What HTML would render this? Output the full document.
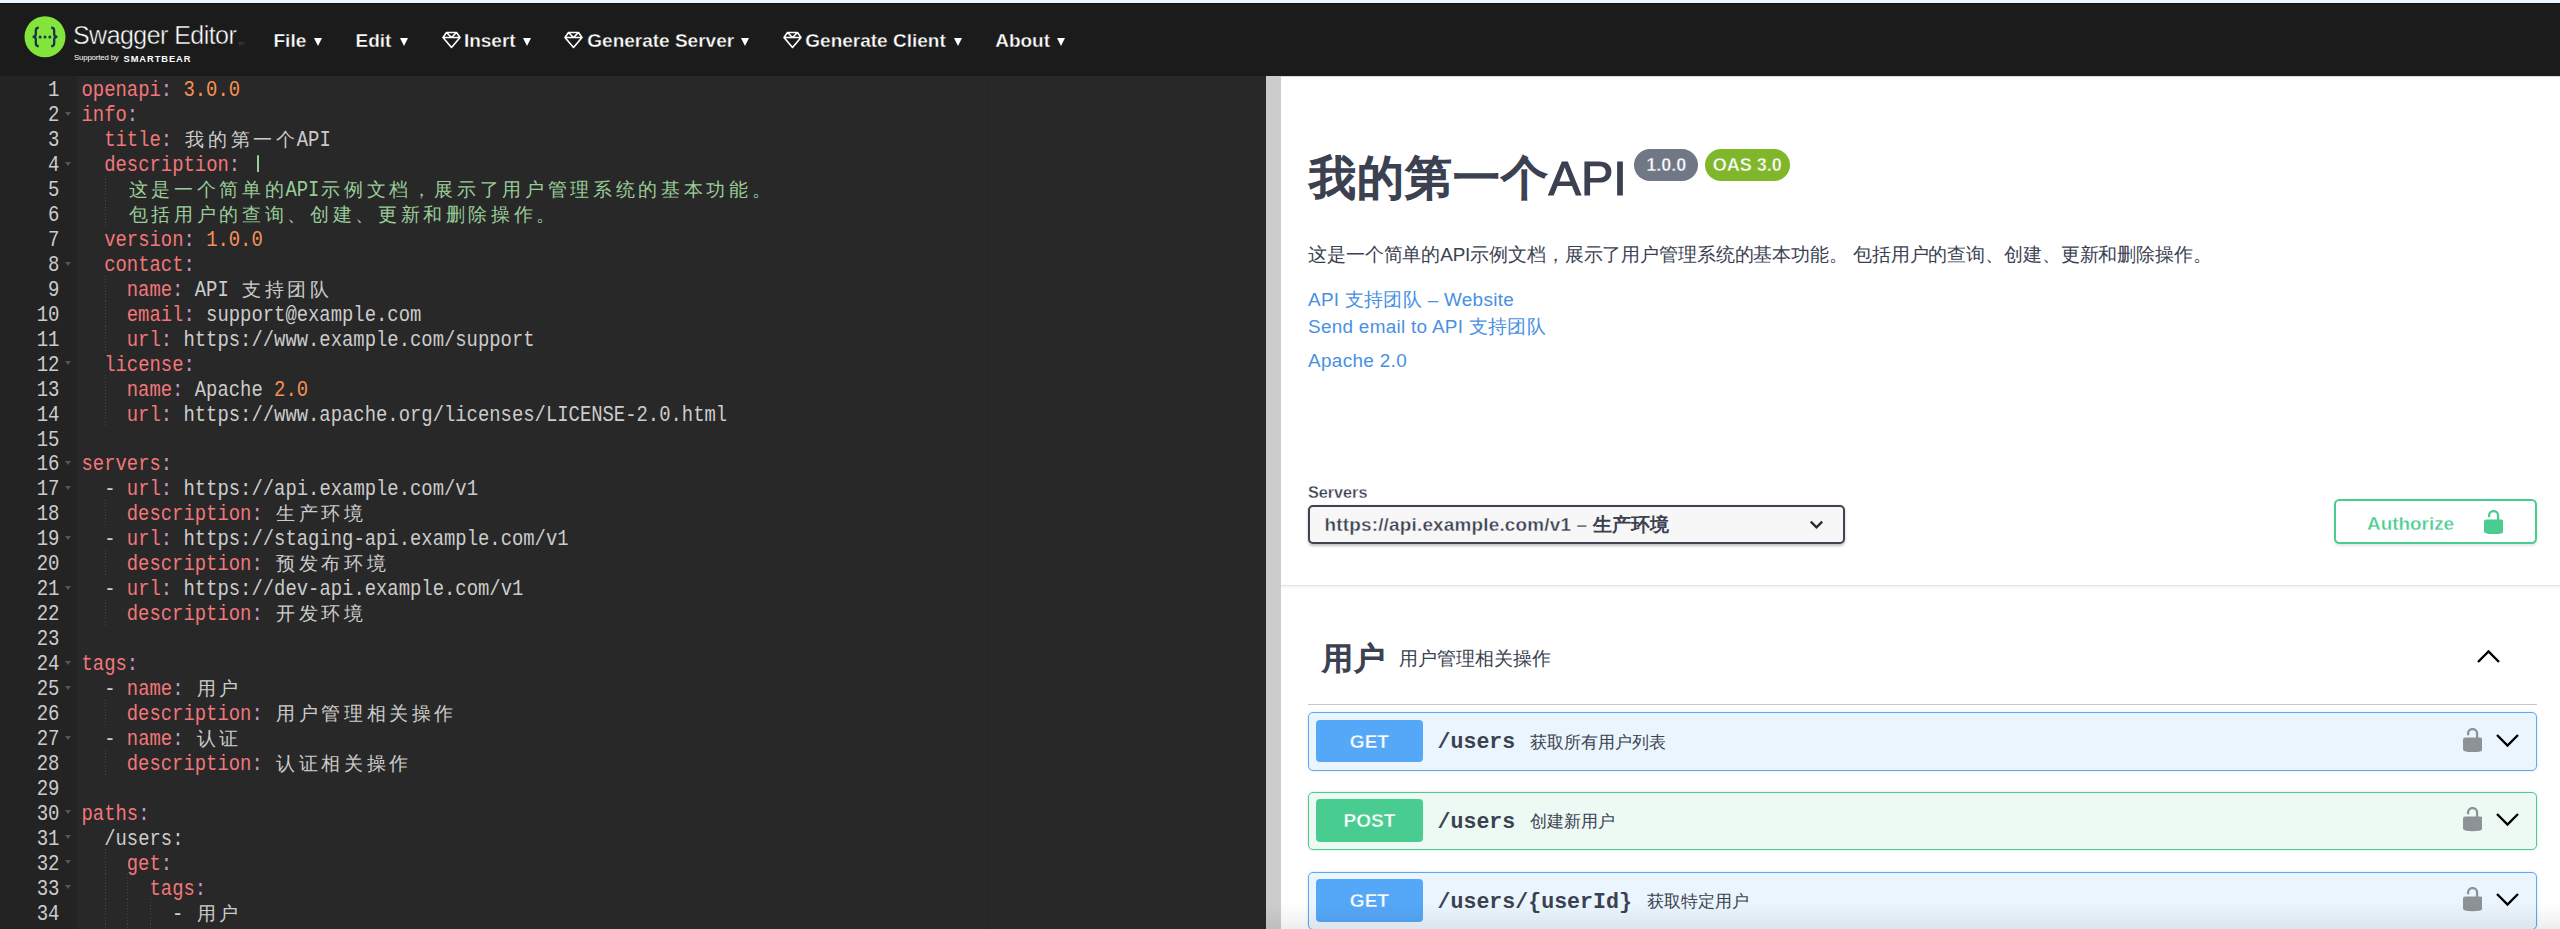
<!DOCTYPE html><html><head><meta charset="utf-8"><style>
*{margin:0;padding:0;box-sizing:border-box}
html,body{width:2560px;height:929px;overflow:hidden;background:#fff;position:relative;font-family:"Liberation Sans",sans-serif}
#strip{position:absolute;left:0;top:0;width:2560px;height:3px;background:#eaf5fd}
#topbar{position:absolute;left:0;top:3px;width:2560px;height:73px;background:#1b1b1b;border-top:1px solid #111}
.brand{position:absolute;color:#fff;white-space:nowrap}
.menu{position:absolute;top:26.7px;color:#fff;font-weight:bold;font-size:19px;line-height:28px;white-space:nowrap;-webkit-text-stroke:.35px #1b1b1b}
.arr{position:absolute;top:38.2px;width:0;height:0;border-left:4.9px solid transparent;border-right:4.9px solid transparent;border-top:8.2px solid #fff}
.dia{position:absolute;top:31px}
#gutter{position:absolute;left:0;top:76px;width:77px;height:853px;background:#232323}
#editor{position:absolute;left:77px;top:76px;width:1189px;height:853px;background:#282828}
#pm{position:absolute;left:988px;top:76px;width:1px;height:853px;background:#252525}
.ln{position:absolute;height:25px;line-height:25px;font-family:"Liberation Mono",monospace;font-size:18.883px;white-space:pre;color:#cccccc;transform:scaleY(1.2);transform-origin:0 17.6px}
.ln i{font-style:normal;display:inline-block;position:relative;top:.2px;width:22.66px;text-align:center;font-size:19px;transform:scaleY(.8333);transform-origin:50% 17.6px}
.bar{display:inline-block;width:11.3px;height:8px;vertical-align:0;position:relative}.bar:after{content:'';position:absolute;left:5.3px;top:-4.6px;width:2.1px;height:13.2px;background:#99cc99}
.k{color:#f2777a}.p{color:#cc99cc}.n{color:#f99157}.t{color:#cccccc}.g{color:#99cc99}
.gn{position:absolute;left:0;width:59.5px;height:25px;line-height:25px;text-align:right;font-family:"Liberation Mono",monospace;font-size:19px;color:#cccccc;transform:scaleY(1.2);transform-origin:0 17.6px}
.fold{position:absolute;left:64.5px;width:0;height:0;border-left:3.6px solid transparent;border-right:3.6px solid transparent;border-top:4.5px solid #555}
.gd{position:absolute;width:1px;height:25px;background-image:linear-gradient(#4a4a4a 50%,transparent 50%);background-size:1px 3px;opacity:.8}
#divider{position:absolute;left:1266px;top:76px;width:15px;height:853px;background:#cccccc}
#right{position:absolute;left:1281px;top:76px;width:1279px;height:853px;background:#fff;overflow:hidden}
.r{position:absolute;white-space:nowrap;color:#3b4151}
.pill{position:absolute;height:32px;border-radius:16px;color:#fff;font-weight:bold;font-size:18px;line-height:32px;text-align:center}
a{color:#4990e2;text-decoration:none}
.opb{position:absolute;left:1308px;width:1229px;height:58.6px;border-radius:5px;box-shadow:0 0 3px rgba(0,0,0,.13)}
.get{border:1.35px solid #5aa9f9;background:#ebf5fd}
.post{border:1.35px solid #49cc90;background:#edfaf4}
.badge{position:absolute;left:6.6px;top:6.6px;width:107.6px;height:42.7px;border-radius:4px;color:#fff;font-weight:bold;font-size:19px;line-height:44.5px;text-align:center}
.get .badge{background:#55a7f7;-webkit-text-stroke:.35px #55a7f7}.post .badge{background:#49cc90;-webkit-text-stroke:.35px #49cc90}
.path{position:absolute;left:128.5px;top:14px;font-family:"Liberation Mono",monospace;font-weight:bold;font-size:21.6px;line-height:30px;color:#3b4151;white-space:nowrap}
.sum{position:absolute;top:14.5px;font-size:17.1px;line-height:30px;color:#3b4151;white-space:nowrap}
.lock{position:absolute;left:1153.6px;top:14.7px}
.chev{position:absolute;left:1185px;top:18.6px}
</style></head><body><div id="strip"></div><div id="topbar"></div>
<svg style="position:absolute;left:23.5px;top:15.5px" width="42" height="42" viewBox="0 0 42 42"><circle cx="21" cy="20.8" r="20.5" fill="#83e53c"/><path d="M14.8 11.6C12.4 11.6 11.8 12.6 11.8 14.6V18.6C11.8 20.2 10.8 20.9 8.6 20.9C10.8 20.9 11.8 21.6 11.8 23.2V27.2C11.8 29.2 12.4 30.2 14.8 30.2" fill="none" stroke="#173647" stroke-width="2.3"/><path d="M27.2 11.6C29.6 11.6 30.2 12.6 30.2 14.6V18.6C30.2 20.2 31.2 20.9 33.4 20.9C31.2 20.9 30.2 21.6 30.2 23.2V27.2C30.2 29.2 29.6 30.2 27.2 30.2" fill="none" stroke="#173647" stroke-width="2.3"/><circle cx="16.1" cy="21" r="1.5" fill="#173647"/><circle cx="21" cy="21" r="1.5" fill="#173647"/><circle cx="25.8" cy="21" r="1.5" fill="#173647"/></svg>
<div class="brand" style="left:73px;top:21px;font-size:25px;line-height:28px;letter-spacing:-0.55px;-webkit-text-stroke:.45px #1b1b1b">Swagger Editor<span style="font-size:4px;letter-spacing:0;vertical-align:-1px;margin-left:2px">TM</span></div>
<div class="brand" style="left:74px;top:53px;font-size:7.8px;line-height:10px;letter-spacing:-0.15px">Supported by</div><div class="brand" style="left:123.5px;top:53.5px;font-size:9.3px;line-height:10px;font-weight:bold;letter-spacing:.95px">SMARTBEAR</div>
<div class="menu" style="left:273.5px">File</div>
<div class="arr" style="left:314.4px"></div>
<div class="menu" style="left:355.5px">Edit</div>
<div class="arr" style="left:399.7px"></div>
<div class="menu" style="left:463.9px">Insert</div>
<div class="arr" style="left:522.5px"></div>
<div class="menu" style="left:587.3px">Generate Server</div>
<div class="arr" style="left:741.0px"></div>
<div class="menu" style="left:805.3px">Generate Client</div>
<div class="arr" style="left:953.8px"></div>
<div class="menu" style="left:995.2px">About</div>
<div class="arr" style="left:1057.0px"></div>
<svg class="dia" style="left:441.5px" width="19" height="18" viewBox="0 0 19 18"><path d="M4.5 1.5h10l3.5 5-8.5 10-8.5-10z M1 6.5h17 M4.5 1.5l5 5 5-5" fill="none" stroke="#fff" stroke-width="1.6" stroke-linejoin="round"/></svg>
<svg class="dia" style="left:564.0px" width="19" height="18" viewBox="0 0 19 18"><path d="M4.5 1.5h10l3.5 5-8.5 10-8.5-10z M1 6.5h17 M4.5 1.5l5 5 5-5" fill="none" stroke="#fff" stroke-width="1.6" stroke-linejoin="round"/></svg>
<svg class="dia" style="left:782.9px" width="19" height="18" viewBox="0 0 19 18"><path d="M4.5 1.5h10l3.5 5-8.5 10-8.5-10z M1 6.5h17 M4.5 1.5l5 5 5-5" fill="none" stroke="#fff" stroke-width="1.6" stroke-linejoin="round"/></svg>
<div id="gutter"></div><div id="editor"></div><div id="pm"></div>
<div class="gd" style="top:175.8px;left:104.7px"></div>
<div class="gd" style="top:200.8px;left:104.7px"></div>
<div class="gd" style="top:275.6px;left:104.7px"></div>
<div class="gd" style="top:300.5px;left:104.7px"></div>
<div class="gd" style="top:325.5px;left:104.7px"></div>
<div class="gd" style="top:375.4px;left:104.7px"></div>
<div class="gd" style="top:400.3px;left:104.7px"></div>
<div class="gd" style="top:500.1px;left:104.7px"></div>
<div class="gd" style="top:550.0px;left:104.7px"></div>
<div class="gd" style="top:599.9px;left:104.7px"></div>
<div class="gd" style="top:699.8px;left:104.7px"></div>
<div class="gd" style="top:749.6px;left:104.7px"></div>
<div class="gd" style="top:849.4px;left:104.7px"></div>
<div class="gd" style="top:874.4px;left:104.7px"></div>
<div class="gd" style="top:874.4px;left:127.3px"></div>
<div class="gd" style="top:899.4px;left:104.7px"></div>
<div class="gd" style="top:899.4px;left:127.3px"></div>
<div class="gd" style="top:899.4px;left:150.0px"></div>
<div class="gd" style="top:924.3px;left:104.7px"></div>
<div class="gd" style="top:924.3px;left:127.3px"></div>
<div class="gd" style="top:924.3px;left:150.0px"></div>
<div class="gn" style="top:79.2px">1</div>
<div class="gn" style="top:104.2px">2</div>
<div class="fold" style="top:111.8px"></div>
<div class="gn" style="top:129.1px">3</div>
<div class="gn" style="top:154.1px">4</div>
<div class="fold" style="top:161.7px"></div>
<div class="gn" style="top:179.0px">5</div>
<div class="gn" style="top:203.9px">6</div>
<div class="gn" style="top:228.9px">7</div>
<div class="gn" style="top:253.9px">8</div>
<div class="fold" style="top:261.5px"></div>
<div class="gn" style="top:278.8px">9</div>
<div class="gn" style="top:303.8px">10</div>
<div class="gn" style="top:328.7px">11</div>
<div class="gn" style="top:353.6px">12</div>
<div class="fold" style="top:361.2px"></div>
<div class="gn" style="top:378.6px">13</div>
<div class="gn" style="top:403.5px">14</div>
<div class="gn" style="top:428.5px">15</div>
<div class="gn" style="top:453.4px">16</div>
<div class="fold" style="top:461.1px"></div>
<div class="gn" style="top:478.4px">17</div>
<div class="fold" style="top:486.0px"></div>
<div class="gn" style="top:503.3px">18</div>
<div class="gn" style="top:528.3px">19</div>
<div class="fold" style="top:535.9px"></div>
<div class="gn" style="top:553.2px">20</div>
<div class="gn" style="top:578.2px">21</div>
<div class="fold" style="top:585.8px"></div>
<div class="gn" style="top:603.1px">22</div>
<div class="gn" style="top:628.1px">23</div>
<div class="gn" style="top:653.1px">24</div>
<div class="fold" style="top:660.7px"></div>
<div class="gn" style="top:678.0px">25</div>
<div class="fold" style="top:685.6px"></div>
<div class="gn" style="top:703.0px">26</div>
<div class="gn" style="top:727.9px">27</div>
<div class="fold" style="top:735.5px"></div>
<div class="gn" style="top:752.9px">28</div>
<div class="gn" style="top:777.8px">29</div>
<div class="gn" style="top:802.8px">30</div>
<div class="fold" style="top:810.4px"></div>
<div class="gn" style="top:827.7px">31</div>
<div class="fold" style="top:835.3px"></div>
<div class="gn" style="top:852.6px">32</div>
<div class="fold" style="top:860.2px"></div>
<div class="gn" style="top:877.6px">33</div>
<div class="fold" style="top:885.2px"></div>
<div class="gn" style="top:902.6px">34</div>
<div class="gn" style="top:927.5px">35</div>
<div class="ln" style="top:79.2px;left:81.5px"><span class="k">openapi</span><span class="p">:</span><span class="t"> </span><span class="n">3.0.0</span></div>
<div class="ln" style="top:104.2px;left:81.5px"><span class="k">info</span><span class="p">:</span></div>
<div class="ln" style="top:129.1px;left:104.2px"><span class="k">title</span><span class="p">:</span><span class="t"> <i>我</i><i>的</i><i>第</i><i>一</i><i>个</i>API</span></div>
<div class="ln" style="top:154.1px;left:104.2px"><span class="k">description</span><span class="p">:</span><span class="t"> </span><span class="g"><b class="bar"></b></span></div>
<div class="ln" style="top:179.0px;left:126.8px"><span class="g"><i>这</i><i>是</i><i>一</i><i>个</i><i>简</i><i>单</i><i>的</i>API<i>示</i><i>例</i><i>文</i><i>档</i><i>，</i><i>展</i><i>示</i><i>了</i><i>用</i><i>户</i><i>管</i><i>理</i><i>系</i><i>统</i><i>的</i><i>基</i><i>本</i><i>功</i><i>能</i><i>。</i></span></div>
<div class="ln" style="top:203.9px;left:126.8px"><span class="g"><i>包</i><i>括</i><i>用</i><i>户</i><i>的</i><i>查</i><i>询</i><i>、</i><i>创</i><i>建</i><i>、</i><i>更</i><i>新</i><i>和</i><i>删</i><i>除</i><i>操</i><i>作</i><i>。</i></span></div>
<div class="ln" style="top:228.9px;left:104.2px"><span class="k">version</span><span class="p">:</span><span class="t"> </span><span class="n">1.0.0</span></div>
<div class="ln" style="top:253.9px;left:104.2px"><span class="k">contact</span><span class="p">:</span></div>
<div class="ln" style="top:278.8px;left:126.8px"><span class="k">name</span><span class="p">:</span><span class="t"> API <i>支</i><i>持</i><i>团</i><i>队</i></span></div>
<div class="ln" style="top:303.8px;left:126.8px"><span class="k">email</span><span class="p">:</span><span class="t"> support@example.com</span></div>
<div class="ln" style="top:328.7px;left:126.8px"><span class="k">url</span><span class="p">:</span><span class="t"> https://www.example.com/support</span></div>
<div class="ln" style="top:353.6px;left:104.2px"><span class="k">license</span><span class="p">:</span></div>
<div class="ln" style="top:378.6px;left:126.8px"><span class="k">name</span><span class="p">:</span><span class="t"> Apache </span><span class="n">2.0</span></div>
<div class="ln" style="top:403.5px;left:126.8px"><span class="k">url</span><span class="p">:</span><span class="t"> https://www.apache.org/licenses/LICENSE-2.0.html</span></div>
<div class="ln" style="top:428.5px;left:81.5px"></div>
<div class="ln" style="top:453.4px;left:81.5px"><span class="k">servers</span><span class="p">:</span></div>
<div class="ln" style="top:478.4px;left:104.2px"><span class="t">- </span><span class="k">url</span><span class="p">:</span><span class="t"> https://api.example.com/v1</span></div>
<div class="ln" style="top:503.3px;left:126.8px"><span class="k">description</span><span class="p">:</span><span class="t"> <i>生</i><i>产</i><i>环</i><i>境</i></span></div>
<div class="ln" style="top:528.3px;left:104.2px"><span class="t">- </span><span class="k">url</span><span class="p">:</span><span class="t"> https://staging-api.example.com/v1</span></div>
<div class="ln" style="top:553.2px;left:126.8px"><span class="k">description</span><span class="p">:</span><span class="t"> <i>预</i><i>发</i><i>布</i><i>环</i><i>境</i></span></div>
<div class="ln" style="top:578.2px;left:104.2px"><span class="t">- </span><span class="k">url</span><span class="p">:</span><span class="t"> https://dev-api.example.com/v1</span></div>
<div class="ln" style="top:603.1px;left:126.8px"><span class="k">description</span><span class="p">:</span><span class="t"> <i>开</i><i>发</i><i>环</i><i>境</i></span></div>
<div class="ln" style="top:628.1px;left:81.5px"></div>
<div class="ln" style="top:653.1px;left:81.5px"><span class="k">tags</span><span class="p">:</span></div>
<div class="ln" style="top:678.0px;left:104.2px"><span class="t">- </span><span class="k">name</span><span class="p">:</span><span class="t"> <i>用</i><i>户</i></span></div>
<div class="ln" style="top:703.0px;left:126.8px"><span class="k">description</span><span class="p">:</span><span class="t"> <i>用</i><i>户</i><i>管</i><i>理</i><i>相</i><i>关</i><i>操</i><i>作</i></span></div>
<div class="ln" style="top:727.9px;left:104.2px"><span class="t">- </span><span class="k">name</span><span class="p">:</span><span class="t"> <i>认</i><i>证</i></span></div>
<div class="ln" style="top:752.9px;left:126.8px"><span class="k">description</span><span class="p">:</span><span class="t"> <i>认</i><i>证</i><i>相</i><i>关</i><i>操</i><i>作</i></span></div>
<div class="ln" style="top:777.8px;left:81.5px"></div>
<div class="ln" style="top:802.8px;left:81.5px"><span class="k">paths</span><span class="p">:</span></div>
<div class="ln" style="top:827.7px;left:104.2px"><span class="t">/users:</span></div>
<div class="ln" style="top:852.6px;left:126.8px"><span class="k">get</span><span class="p">:</span></div>
<div class="ln" style="top:877.6px;left:149.5px"><span class="k">tags</span><span class="p">:</span></div>
<div class="ln" style="top:902.6px;left:172.1px"><span class="t">- </span><span class="t"><i>用</i><i>户</i></span></div>
<div class="ln" style="top:927.5px;left:172.1px"><span class="k">summary</span><span class="p">:</span><span class="t"> <i>获</i><i>取</i><i>所</i><i>有</i><i>用</i><i>户</i><i>列</i><i>表</i></span></div>
<div id="divider"></div><div id="right"></div>
<div style="position:absolute;left:1281px;top:76px;width:1279px;height:1px;background:#d9d9d9"></div>
<div style="position:absolute;left:1281px;top:584.8px;width:1279px;height:1.6px;background:#e3e3e3"></div><div style="position:absolute;left:1281px;top:586.4px;width:1279px;height:1.6px;background:#f6f6f6"></div>
<div class="r" style="left:1309px;top:145px;font-size:48.6px;line-height:66px;font-weight:400"><span style="font-size:46.5px;letter-spacing:.9px;-webkit-text-stroke:2px #3b4151;position:relative;top:-.6px">我的第一个</span><span style="letter-spacing:0;-webkit-text-stroke:1.1px #3b4151">API</span></div>
<div class="pill" style="left:1634.3px;top:149.3px;width:64px;background:#707785;-webkit-text-stroke:.4px #707785">1.0.0</div>
<div class="pill" style="left:1705px;top:149.3px;width:84.7px;background:#80b62a;-webkit-text-stroke:.4px #80b62a">OAS 3.0</div>
<div class="r" style="left:1308px;top:241.5px;font-size:18.9px;line-height:26px;letter-spacing:-.12px">这是一个简单的API示例文档，展示了用户管理系统的基本功能。 包括用户的查询、创建、更新和删除操作。</div>
<div class="r" style="left:1308px;top:287px;font-size:18.9px;line-height:26px;letter-spacing:.3px"><a>API 支持团队 – Website</a></div>
<div class="r" style="left:1308px;top:314px;font-size:18.9px;line-height:26px;letter-spacing:.3px"><a>Send email to API 支持团队</a></div>
<div class="r" style="left:1308px;top:348px;font-size:18.9px;line-height:26px;letter-spacing:.35px"><a>Apache 2.0</a></div>
<div class="r" style="left:1308px;top:481px;font-size:16.2px;line-height:22px;font-weight:bold;-webkit-text-stroke:.3px #fff">Servers</div>
<div style="position:absolute;left:1308px;top:504.5px;width:537px;height:39px;border:2.7px solid #41444e;border-radius:5px;background:#f7f7f7;box-shadow:0 1.35px 2.7px rgba(0,0,0,.25)"></div>
<div class="r" style="left:1324.5px;top:511px;font-size:18.9px;line-height:28px;font-weight:bold;letter-spacing:.2px;-webkit-text-stroke:.35px #f7f7f7">https://api.example.com/v1 – <span style="-webkit-text-stroke:0">生产环境</span></div>
<svg style="position:absolute;left:1805px;top:518px" width="20" height="13" viewBox="0 0 20 13"><path d="M5.8 3.6L11.5 9.3L17.2 3.6" fill="none" stroke="#2b2b2b" stroke-width="2.3"/></svg>
<div style="position:absolute;left:2334.2px;top:499.1px;width:202.4px;height:45.2px;border:2.7px solid #49cc90;border-radius:5.4px;background:#fff;box-shadow:0 1.35px 2.7px rgba(0,0,0,.1)"></div>
<div class="r" style="left:2367px;top:509.5px;font-size:18.9px;line-height:28px;font-weight:bold;color:#49cc90;-webkit-text-stroke:.35px #fff">Authorize</div>
<div style="position:absolute;left:2484px;top:509.5px"><svg width="19.4" height="24.2" viewBox="0 0 19.4 24.2"><path d="M5.1 7.2V5.6A4.5 4.5 0 0 1 14.1 5.6V10.5" fill="none" stroke="#49cc90" stroke-width="2.3"/><path d="M0 11.8A2.4 2.4 0 0 1 2.4 9.4H17A2.4 2.4 0 0 1 19.4 11.8V21.6Q19.4 24.2 9.7 24.2Q0 24.2 0 21.6Z" fill="#49cc90"/></svg></div>
<div class="r" style="left:1322px;top:636.2px;font-size:30.6px;line-height:44px;font-weight:400;letter-spacing:.6px;-webkit-text-stroke:1.5px #3b4151">用户</div>
<div class="r" style="left:1399px;top:645.5px;font-size:18.9px;line-height:26px">用户管理相关操作</div>
<svg style="position:absolute;left:2475px;top:647px" width="27" height="19" viewBox="0 0 27 19"><path d="M3 15L13.5 4.5L24 15" fill="none" stroke="#000" stroke-width="2.4"/></svg>
<div style="position:absolute;left:1308px;top:704px;width:1229px;height:1.35px;background:rgba(59,65,81,.3)"></div>
<div class="opb get" style="top:712.0px"><div class="badge">GET</div><div class="path">/users</div><div class="sum" style="left:221.0px">获取所有用户列表</div><div class="lock"><svg width="19.4" height="24.2" viewBox="0 0 19.4 24.2"><path d="M5.1 7.2V5.6A4.5 4.5 0 0 1 14.1 5.6V10.5" fill="none" stroke="#8e9196" stroke-width="2.3"/><path d="M0 11.8A2.4 2.4 0 0 1 2.4 9.4H17A2.4 2.4 0 0 1 19.4 11.8V21.6Q19.4 24.2 9.7 24.2Q0 24.2 0 21.6Z" fill="#8e9196"/></svg></div><svg class="chev" width="27" height="19" viewBox="0 0 27 19"><path d="M3 3L13.5 13.5L24 3" fill="none" stroke="#000" stroke-width="2.4"/></svg></div>
<div class="opb post" style="top:791.7px"><div class="badge">POST</div><div class="path">/users</div><div class="sum" style="left:221.0px">创建新用户</div><div class="lock"><svg width="19.4" height="24.2" viewBox="0 0 19.4 24.2"><path d="M5.1 7.2V5.6A4.5 4.5 0 0 1 14.1 5.6V10.5" fill="none" stroke="#8e9196" stroke-width="2.3"/><path d="M0 11.8A2.4 2.4 0 0 1 2.4 9.4H17A2.4 2.4 0 0 1 19.4 11.8V21.6Q19.4 24.2 9.7 24.2Q0 24.2 0 21.6Z" fill="#8e9196"/></svg></div><svg class="chev" width="27" height="19" viewBox="0 0 27 19"><path d="M3 3L13.5 13.5L24 3" fill="none" stroke="#000" stroke-width="2.4"/></svg></div>
<div class="opb get" style="top:871.8px"><div class="badge">GET</div><div class="path">/users/{userId}</div><div class="sum" style="left:338.0px">获取特定用户</div><div class="lock"><svg width="19.4" height="24.2" viewBox="0 0 19.4 24.2"><path d="M5.1 7.2V5.6A4.5 4.5 0 0 1 14.1 5.6V10.5" fill="none" stroke="#8e9196" stroke-width="2.3"/><path d="M0 11.8A2.4 2.4 0 0 1 2.4 9.4H17A2.4 2.4 0 0 1 19.4 11.8V21.6Q19.4 24.2 9.7 24.2Q0 24.2 0 21.6Z" fill="#8e9196"/></svg></div><svg class="chev" width="27" height="19" viewBox="0 0 27 19"><path d="M3 3L13.5 13.5L24 3" fill="none" stroke="#000" stroke-width="2.4"/></svg></div>
<div style="position:absolute;left:1266px;top:903px;width:1294px;height:26px;background:linear-gradient(rgba(0,0,0,0),rgba(0,0,0,.065))"></div></body></html>
